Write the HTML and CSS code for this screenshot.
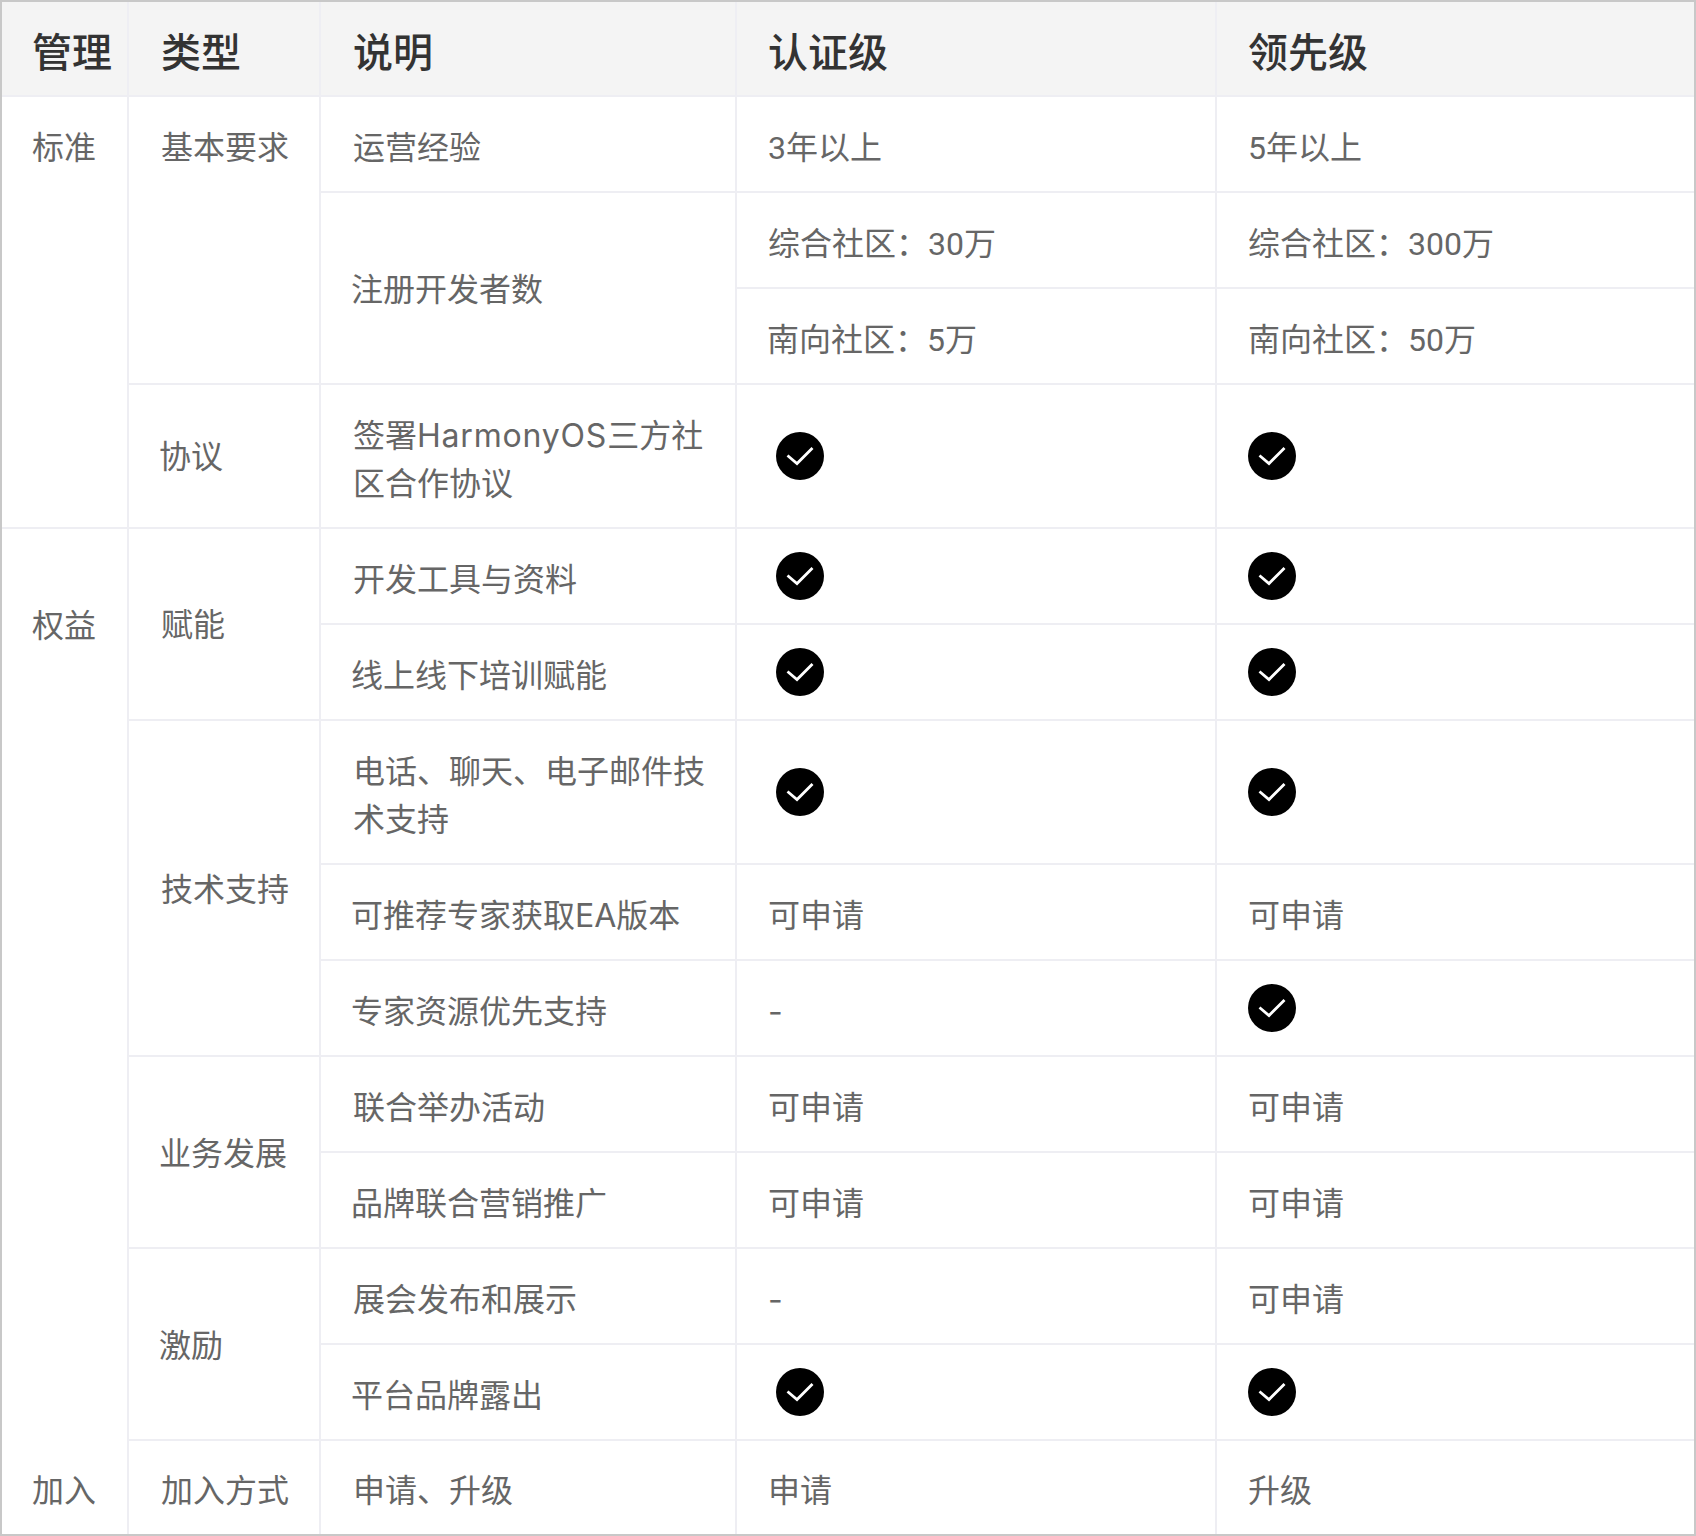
FILE: index.html
```html
<!DOCTYPE html>
<html lang="zh-CN">
<head>
<meta charset="utf-8">
<title>社区等级</title>
<link rel="stylesheet" href="styles.css">
</head>
<body>
<svg class="defs" aria-hidden="true"><symbol id="ok" viewBox="0 0 48 48"><circle cx="24" cy="24" r="24" fill="#000"/><path d="M11.5 23.5 21 31.5 36.5 16" fill="none" stroke="#fff" stroke-width="2.8"/></symbol></svg>
<div class="frame">
<table class="grid">
<colgroup><col class="c1"><col class="c2"><col class="c3"><col class="c4"><col class="c5"></colgroup>
<thead>
<tr><th>管理</th><th>类型</th><th>说明</th><th class="val">认证级</th><th class="end">领先级</th></tr>
</thead>
<tbody>
<tr><td rowspan="4" class="top">标准</td><td rowspan="3" class="top">基本要求</td><td>运营经验</td><td class="val"><span class="num">3</span>年以上</td><td class="end"><span class="num">5</span>年以上</td></tr>
<tr><td rowspan="2" class="span">注册开发者数</td><td class="val">综合社区：<span class="num">30</span>万</td><td class="end">综合社区：<span class="num">300</span>万</td></tr>
<tr><td class="val">南向社区：<span class="num">5</span>万</td><td class="end">南向社区：<span class="num">50</span>万</td></tr>
<tr><td class="mid">协议</td><td>签署<span class="word">HarmonyOS</span>三方社<br>区合作协议</td><td class="tick"><svg class="ic"><use href="#ok"/></svg></td><td class="tick2"><svg class="ic"><use href="#ok"/></svg></td></tr>
<tr><td rowspan="2" class="nob mid">权益</td><td rowspan="2" class="mid">赋能</td><td>开发工具与资料</td><td class="tick"><svg class="ic"><use href="#ok"/></svg></td><td class="tick2"><svg class="ic"><use href="#ok"/></svg></td></tr>
<tr><td>线上线下培训赋能</td><td class="tick"><svg class="ic"><use href="#ok"/></svg></td><td class="tick2"><svg class="ic"><use href="#ok"/></svg></td></tr>
<tr><td rowspan="7" class="nob"></td><td rowspan="3" class="span">技术支持</td><td>电话、聊天、电子邮件技<br>术支持</td><td class="tick"><svg class="ic"><use href="#ok"/></svg></td><td class="tick2"><svg class="ic"><use href="#ok"/></svg></td></tr>
<tr><td>可推荐专家获取EA版本</td><td class="val">可申请</td><td class="end">可申请</td></tr>
<tr><td>专家资源优先支持</td><td class="val">-</td><td class="tick2"><svg class="ic"><use href="#ok"/></svg></td></tr>
<tr><td rowspan="2" class="span">业务发展</td><td>联合举办活动</td><td class="val">可申请</td><td class="end">可申请</td></tr>
<tr><td>品牌联合营销推广</td><td class="val">可申请</td><td class="end">可申请</td></tr>
<tr><td rowspan="2" class="span">激励</td><td>展会发布和展示</td><td class="val">-</td><td class="end">可申请</td></tr>
<tr><td>平台品牌露出</td><td class="tick"><svg class="ic"><use href="#ok"/></svg></td><td class="tick2"><svg class="ic"><use href="#ok"/></svg></td></tr>
<tr class="last"><td>加入</td><td>加入方式</td><td>申请、升级</td><td class="val">申请</td><td class="end">升级</td></tr>
</tbody>
</table>
</div>
</body>
</html>
```

FILE: styles.css
```css
html, body {
  margin: 0;
  padding: 0;
  background: #fff;
}
.defs {
  position: absolute;
  width: 0;
  height: 0;
}
.frame {
  width: 1696px;
  height: 1536px;
  box-sizing: border-box;
  border: 2px solid #c8c8c8;
  overflow: hidden;
}
.grid {
  width: 1692px;
  table-layout: fixed;
  border-collapse: separate;
  border-spacing: 0;
  font-family: "Inter", "Noto Sans CJK SC", sans-serif;
  font-size: 32px;
  line-height: 48px;
  color: #666;
}
.c1 { width: 127px; }
.c2 { width: 192px; }
.c3 { width: 416px; }
.c4 { width: 480px; }
.c5 { width: 477px; }
th, td {
  box-sizing: border-box;
  padding: 27px 30px 19px 32px;
  border-right: 2px solid #eeeef3;
  border-bottom: 2px solid #eeeef3;
  text-align: left;
  vertical-align: middle;
}
td:first-child, th:first-child {
  padding-left: 30px;
  padding-right: 0;
}
th {
  height: 95px;
  padding-top: 27px;
  padding-bottom: 18px;
  background: #f4f4f4;
  color: #333;
  font-size: 40px;
  font-weight: 500;
}
.val { padding-left: 31px; }
.end { padding-left: 31px; border-right: 0; }
.top { vertical-align: top; }
.nob { border-bottom: 0; }
.span { padding-top: 25px; padding-bottom: 21px; }
td.mid, td.mid:first-child { padding-top: 24px; padding-bottom: 22px; }
.last td { border-bottom: 0; padding-top: 26px; padding-bottom: 19px; }
.tick { padding: 23px 30px 23px 39px; }
.tick2 { padding: 23px 30px 23px 31px; border-right: 0; }
.ic {
  display: block;
  width: 48px;
  height: 48px;
}
.num { font-family: "Roboto", sans-serif; }
.word { letter-spacing: 0.8px; }
```
